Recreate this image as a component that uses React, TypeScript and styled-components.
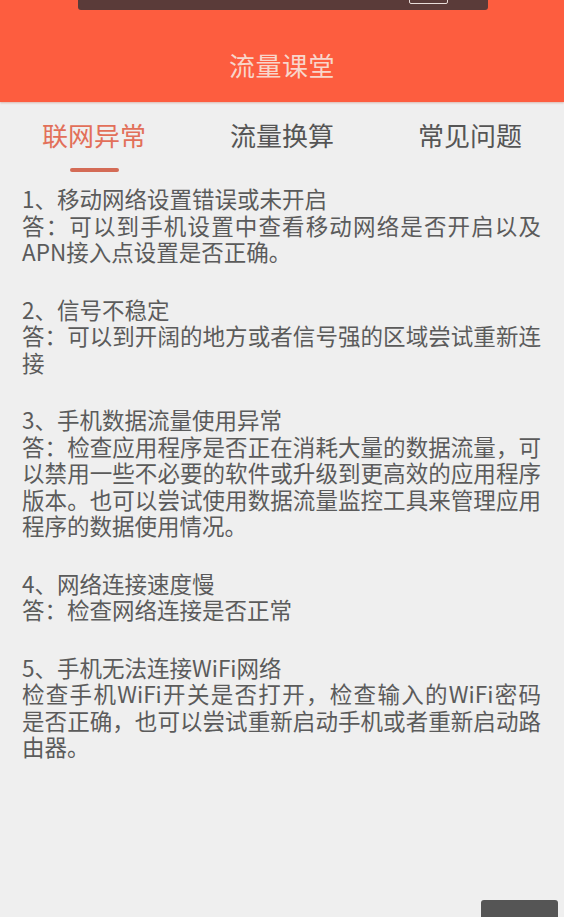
import React, { useState } from 'react'
import styled, { createGlobalStyle } from 'styled-components'

const GlobalStyle = createGlobalStyle`
    html, body {
        margin: 0;
        padding: 0;
        background: #efefef;
    }
    body {
        font-family: "Noto Sans CJK SC", "Noto Sans", sans-serif;
    }
`

const Page = styled.div`
    position: relative;
    width: 564px;
    height: 917px;
    overflow: hidden;
    background: #efefef;
`
const Header = styled.header`
    height: 102px;
    background: #fd5d3f;
    display: flex;
    align-items: center;
    justify-content: center;
    box-shadow: 0 1px 2px rgba(180, 80, 60, 0.35);
`
const Title = styled.h1`
    margin: 26px 0 0;
    font-size: 26px;
    font-weight: 400;
    color: #f8d6cb;
    letter-spacing: 0.5px;
`
const TopBar = styled.div`
    position: absolute;
    top: 0;
    left: 78px;
    width: 410px;
    height: 10px;
    display: flex;
    justify-content: flex-end;
    padding-right: 40px;
    box-sizing: border-box;
    background: #5a3b39;
    border-radius: 0 0 3px 3px;
`
const TopBarMark = styled.div`
    margin-top: -3px;
    width: 37px;
    height: 5px;
    border: 1px solid #e8dcd8;
    border-radius: 2px;
`
const Tabs = styled.nav`
    display: grid;
    grid-template-columns: repeat(3, 188px);
    height: 70px;
`
const Tab = styled.div<{ $active?: boolean }>`
    display: flex;
    flex-direction: column;
    align-items: center;
    padding-top: 16px;
    font-size: 26px;
    line-height: 34px;
    color: ${({ $active }) => ($active ? '#e2705a' : '#555555')};
    cursor: pointer;
`
const Underline = styled.span`
    margin-top: 16px;
    width: 49px;
    height: 4px;
    border-radius: 2px;
    background: #d46b56;
`
const Content = styled.main`
    padding: 13px 23px 0 22px;
`
const Section = styled.section`
    margin-bottom: 31px;
    font-size: 22.5px;
    line-height: 26.5px;
    color: #5b5b5b;
`
const Line = styled.span<{ $fill?: boolean }>`
    display: block;
    text-align: left;
    text-align-last: ${({ $fill }) => ($fill ? 'justify' : 'left')};
`
const FloatButton = styled.div`
    position: absolute;
    right: 6px;
    bottom: 0;
    width: 77px;
    height: 17px;
    background: #555555;
    border-radius: 3px 3px 0 0;
`

const tabs = ['联网异常', '流量换算', '常见问题']

// each item: title line, then the wrapped answer lines
const items: string[][] = [
    ['1、移动网络设置错误或未开启', '答：可以到手机设置中查看移动网络是否开启以及', 'APN接入点设置是否正确。'],
    ['2、信号不稳定', '答：可以到开阔的地方或者信号强的区域尝试重新连', '接'],
    [
        '3、手机数据流量使用异常',
        '答：检查应用程序是否正在消耗大量的数据流量，可',
        '以禁用一些不必要的软件或升级到更高效的应用程序',
        '版本。也可以尝试使用数据流量监控工具来管理应用',
        '程序的数据使用情况。',
    ],
    ['4、网络连接速度慢', '答：检查网络连接是否正常'],
    [
        '5、手机无法连接WiFi网络',
        '检查手机WiFi开关是否打开，检查输入的WiFi密码',
        '是否正确，也可以尝试重新启动手机或者重新启动路',
        '由器。',
    ],
]

const App = () => {
    const [active, setActive] = useState(0)

    return (
        <Page>
            <GlobalStyle />
            <Header>
                <Title>流量课堂</Title>
            </Header>
            <TopBar>
                <TopBarMark />
            </TopBar>

            <Tabs>
                {tabs.map((t, i) => (
                    <Tab key={t} $active={i === active} onClick={() => setActive(i)}>
                        {t}
                        {i === active && <Underline />}
                    </Tab>
                ))}
            </Tabs>

            <Content>
                {items.map((lines, i) => (
                    <Section key={i}>
                        {lines.map((l, j) => (
                            <Line key={j} $fill={j > 0 && j < lines.length - 1}>
                                {l}
                            </Line>
                        ))}
                    </Section>
                ))}
            </Content>

            <FloatButton />
        </Page>
    )
}

export default App
